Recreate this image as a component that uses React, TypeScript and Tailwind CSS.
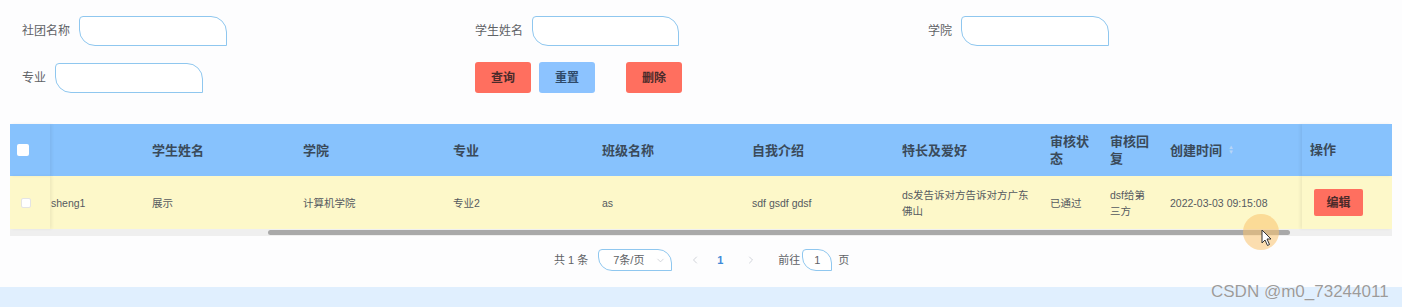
import { ChevronDown, ChevronLeft, ChevronRight } from "lucide-react";

const inputShape =
  "h-[30px] border-[1.5px] border-[#8fc7ef] bg-white rounded-tl-[4px] rounded-tr-[16px] rounded-br-none rounded-bl-[16px]";

function Field({ label, width = "w-[148px]" }: { label: string; width?: string }) {
  return (
    <div className="flex items-center gap-[9px]">
      <span className="text-[12px] text-[#606266]">{label}</span>
      <div className={`${inputShape} ${width}`} />
    </div>
  );
}

const columns = [
  { key: "a", title: "", w: "w-[90px]", pl: "pl-[1px]" },
  { key: "name", title: "学生姓名", w: "w-[150px]", pl: "pl-[12px]" },
  { key: "college", title: "学院", w: "w-[150px]", pl: "pl-[13px]" },
  { key: "major", title: "专业", w: "w-[150px]", pl: "pl-[13px]" },
  { key: "cls", title: "班级名称", w: "w-[150px]", pl: "pl-[12px]" },
  { key: "intro", title: "自我介绍", w: "w-[150px]", pl: "pl-[12px]" },
  { key: "hobby", title: "特长及爱好", w: "w-[148px]", pl: "pl-[12px]" },
  { key: "status", title: "审核状态", w: "w-[60px]", pl: "pl-[12px]" },
  { key: "reply", title: "审核回复", w: "w-[60px]", pl: "pl-[12px]" },
  { key: "time", title: "创建时间", w: "w-[144px]", pl: "pl-[12px]" },
];

const row: Record<string, string> = {
  a: "sheng1",
  name: "展示",
  college: "计算机学院",
  major: "专业2",
  cls: "as",
  intro: "sdf gsdf gdsf",
  hobby: "ds发告诉对方告诉对方广东佛山",
  status: "已通过",
  reply: "dsf给第三方",
  time: "2022-03-03 09:15:08",
};

export default function App() {
  return (
    <div
      className="relative flex h-[307px] w-[1402px] flex-col overflow-hidden bg-[#fdfdfe]"
      style={{ fontFamily: '"Liberation Sans", "Noto Sans CJK SC", sans-serif' }}
    >
      {/* search form */}
      <div className="grid grid-cols-[453px_453px_auto] gap-y-[16px] pl-[22px] pt-[16px]">
        <Field label="社团名称" />
        <Field label="学生姓名" width="w-[147px]" />
        <Field label="学院" />
        <Field label="专业" />
        <div className="flex items-center">
          <button className="h-[31px] w-[56px] rounded-[3px] bg-[#ff6f5f] text-[12px] font-bold text-[#4a2a2a]">
            查询
          </button>
          <button className="ml-[8px] h-[31px] w-[56px] rounded-[3px] bg-[#8cc3ff] text-[12px] font-bold text-[#2f4a6a]">
            重置
          </button>
          <button className="ml-[31px] h-[31px] w-[56px] rounded-[3px] bg-[#ff6f5f] text-[12px] font-bold text-[#4a2a2a]">
            删除
          </button>
        </div>
      </div>

      {/* table */}
      <div className="ml-[10px] mt-[31px] w-[1382px]">
        <div className="flex h-[52px] bg-[#87c2fd] text-[13px] font-bold text-[#3a4a5a]">
          <div className="flex w-[40px] items-center pl-[7px] shadow-[2px_0_3px_rgba(0,0,0,0.06)]">
            <span className="h-[12px] w-[12px] rounded-[2px] bg-white" />
          </div>
          {columns.map((c) => (
            <div key={c.key} className={`flex items-center ${c.w} ${c.pl} pr-[8px] leading-[17px]`}>
              {c.title}
              {c.key === "time" && (
                <span className="ml-[6px] flex flex-col text-[6px] leading-[5px] text-[#b7d6f7]">
                  <span>▲</span>
                  <span>▼</span>
                </span>
              )}
            </div>
          ))}
          <div className="flex w-[90px] items-center pl-[8px] shadow-[-2px_0_3px_rgba(0,0,0,0.06)]">操作</div>
        </div>
        <div className="flex h-[53px] bg-[#fdf8c9] text-[10.5px] text-[#555a60]">
          <div className="flex w-[40px] items-center pl-[11px] shadow-[2px_0_3px_rgba(0,0,0,0.06)]">
            <span className="h-[10px] w-[10px] rounded-[2px] border border-[#e4e4e4] bg-white" />
          </div>
          {columns.map((c) => (
            <div key={c.key} className={`flex items-center ${c.w} ${c.pl} pr-[8px] leading-[16px]`}>
              {row[c.key]}
            </div>
          ))}
          <div className="flex w-[90px] items-center pl-[12px] shadow-[-2px_0_3px_rgba(0,0,0,0.06)]">
            <button className="h-[27px] w-[49px] rounded-[2px] bg-[#ff6f5f] text-[12px] font-bold text-[#4a2a2a]">
              编辑
            </button>
          </div>
        </div>
        {/* horizontal scrollbar */}
        <div className="flex h-[7px] bg-[#efefef]">
          <div className="ml-[258px] mt-[1px] h-[5px] w-[1022px] rounded-full bg-[#a9a9a9]" />
        </div>
      </div>

      {/* pagination */}
      <div className="mt-[13px] flex h-[22px] items-center pl-[554px] text-[11px] text-[#606266]">
        <span>共 1 条</span>
        <div className="ml-[10px] flex h-[22px] w-[74px] items-center justify-between pl-[14px] pr-[5px] border-[1.5px] border-[#8fc7ef] bg-white rounded-tl-[4px] rounded-tr-[14px] rounded-bl-[14px]">
          <span>7条/页</span>
          <ChevronDown size={11} strokeWidth={1.5} className="text-[#c0c4cc]" />
        </div>
        <ChevronLeft size={12} strokeWidth={1.5} className="ml-[17px] text-[#c0c4cc]" />
        <span className="ml-[16px] font-bold text-[#3e8ad8]">1</span>
        <ChevronRight size={12} strokeWidth={1.5} className="ml-[22px] text-[#c0c4cc]" />
        <span className="ml-[21px]">前往</span>
        <div className="ml-[2px] flex h-[22px] w-[30px] items-center justify-center border-[1.5px] border-[#8fc7ef] bg-white rounded-tl-[4px] rounded-tr-[14px] rounded-bl-[14px]">
          1
        </div>
        <span className="ml-[6px]">页</span>
      </div>

      <div className="mt-auto h-[20px] bg-[#e0effe]" />

      {/* watermark */}
      <span className="absolute left-[1211px] top-[279px] text-[17px] text-[#9b9b9b] [text-shadow:0_0_1px_#fff]">
        CSDN @m0_73244011
      </span>

      {/* cursor highlight */}
      <div className="absolute left-[1243px] top-[214px] h-[36px] w-[36px] rounded-full bg-[rgba(250,195,110,0.55)]" />
      <svg className="absolute left-[1261px] top-[229px]" width="12" height="18" viewBox="0 0 12 18">
        <path d="M1 1 L1 14 L4 11 L6.5 16.5 L8.5 15.5 L6 10 L10 10 Z" fill="#fff" stroke="#333" strokeWidth="1" strokeLinejoin="round" />
      </svg>
    </div>
  );
}
